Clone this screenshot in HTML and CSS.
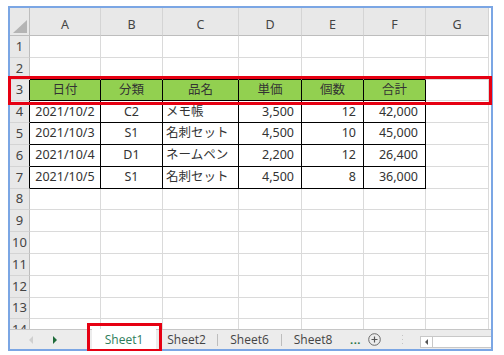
FILE: index.html
```html
<!DOCTYPE html>
<html lang="ja">
  <head>
    <meta charset="UTF-8" />
    <title>Sheet1</title>
    <link rel="stylesheet" href="styles.css">
  </head>
  <body>
    <div class="book">

      <div class="sheet">
        <table class="grid">
          <colgroup>
            <col class="c-row">
            <col class="c-a">
            <col class="c-b">
            <col class="c-c">
            <col class="c-d">
            <col class="c-e">
            <col class="c-f">
            <col class="c-g">
          </colgroup>
          <tr class="head">
            <th class="corner"><span class="tri"></span></th>
            <th>A</th><th>B</th><th>C</th><th>D</th><th>E</th><th>F</th><th>G</th>
          </tr>
          <tr><th>1</th><td></td><td></td><td></td><td></td><td></td><td></td><td></td></tr>
          <tr><th>2</th><td class="above"></td><td class="above"></td><td class="above"></td><td class="above"></td><td class="above"></td><td class="above"></td><td></td></tr>
          <tr class="title">
            <th class="edge">3</th>
            <td class="b ctr">日付</td>
            <td class="b ctr">分類</td>
            <td class="b ctr">品名</td>
            <td class="b ctr">単価</td>
            <td class="b ctr">個数</td>
            <td class="b ctr">合計</td>
            <td></td>
          </tr>
          <tr>
            <th class="edge">4</th>
            <td class="b ctr">2021/10/2</td>
            <td class="b ctr">C2</td>
            <td class="b">メモ帳</td>
            <td class="b num">3,500</td>
            <td class="b num">12</td>
            <td class="b num">42,000</td>
            <td></td>
          </tr>
          <tr>
            <th class="edge">5</th>
            <td class="b ctr">2021/10/3</td>
            <td class="b ctr">S1</td>
            <td class="b">名刺セット</td>
            <td class="b num">4,500</td>
            <td class="b num">10</td>
            <td class="b num">45,000</td>
            <td></td>
          </tr>
          <tr>
            <th class="edge">6</th>
            <td class="b ctr">2021/10/4</td>
            <td class="b ctr">D1</td>
            <td class="b">ネームペン</td>
            <td class="b num">2,200</td>
            <td class="b num">12</td>
            <td class="b num">26,400</td>
            <td></td>
          </tr>
          <tr>
            <th class="edge">7</th>
            <td class="b ctr">2021/10/5</td>
            <td class="b ctr">S1</td>
            <td class="b">名刺セット</td>
            <td class="b num">4,500</td>
            <td class="b num">8</td>
            <td class="b num">36,000</td>
            <td></td>
          </tr>
          <tr><th>8</th><td></td><td></td><td></td><td></td><td></td><td></td><td></td></tr>
          <tr><th>9</th><td></td><td></td><td></td><td></td><td></td><td></td><td></td></tr>
          <tr><th>10</th><td></td><td></td><td></td><td></td><td></td><td></td><td></td></tr>
          <tr><th>11</th><td></td><td></td><td></td><td></td><td></td><td></td><td></td></tr>
          <tr><th>12</th><td></td><td></td><td></td><td></td><td></td><td></td><td></td></tr>
          <tr><th>13</th><td></td><td></td><td></td><td></td><td></td><td></td><td></td></tr>
          <tr><th>14</th><td></td><td></td><td></td><td></td><td></td><td></td><td></td></tr>
        </table>
      </div>

      <div class="tabs">
        <div class="nav">
          <span class="arrow prev"></span>
          <span class="arrow next"></span>
        </div>
        <div class="tab active">Sheet1</div>
        <div class="tab">Sheet2</div>
        <div class="tab wide">Sheet6</div>
        <div class="tab last">Sheet8</div>
        <span class="more">...</span>
        <svg class="add" width="13" height="13" viewBox="0 0 13 13">
          <circle cx="6.5" cy="6.5" r="5.8" fill="none" stroke="#6a6a6a" stroke-width="1"/>
          <path d="M6.5 3.5v6M3.5 6.5h6" stroke="#555" stroke-width="1.2"/>
        </svg>
        <svg class="grip" width="3" height="11" viewBox="0 0 3 11">
          <rect x="1" y="1" width="1" height="1" fill="#c4c4c4"/>
          <rect x="1" y="5" width="1" height="1" fill="#c4c4c4"/>
          <rect x="1" y="9" width="1" height="1" fill="#c4c4c4"/>
        </svg>
        <div class="hscroll">
          <span class="scroll-btn"><span class="arrow small"></span></span>
        </div>
      </div>

    </div>

    <div class="mark mark-row"></div>
    <div class="mark mark-tab"></div>
  </body>
</html>
```

FILE: styles.css
```css
* {
  box-sizing: border-box;
}
body {
  margin: 0;
  padding: 0;
  position: relative;
  background-color: white;
  color: #333;
  font-family: 'Noto Sans', 'Noto Sans CJK JP', sans-serif;
}
.book {
  display: flex;
  flex-direction: column;
  width: 485px;
  height: 345px;
  margin: 6px 0 0 8px;
  border: 2px solid #7ba6e4;
  background-color: white;
}
.sheet {
  flex: 1;
  overflow: hidden;
}

/* grid */
.grid {
  table-layout: fixed;
  width: 479px;
  border-collapse: separate;
  border-spacing: 0;
  font-size: 12.5px;
}
.c-row { width: 20px; }
.c-a { width: 71px; }
.c-b { width: 62px; }
.c-c { width: 76px; }
.c-d { width: 63px; }
.c-e { width: 62px; }
.c-f { width: 62px; }
.c-g { width: 63px; }
.grid tr {
  height: 21.8px;
}
.grid tr.head {
  height: 28px;
}
.grid th, .grid td {
  padding: 0;
  border-right: 1px solid #dadada;
  border-bottom: 1px solid #dadada;
  line-height: 1;
  white-space: nowrap;
  overflow: hidden;
  vertical-align: middle;
}
.grid th {
  background-color: #e8e8e8;
  color: #444;
  font-size: 13px;
  font-weight: normal;
  text-align: center;
  border-right-color: #bdbdbd;
  border-bottom-color: #d4d4d4;
}
.head th {
  vertical-align: bottom;
  padding-bottom: 4px;
  font-size: 12.5px;
  border-right-color: #d4d4d4;
  border-bottom-color: #bdbdbd;
}
.head th.corner {
  padding: 0 2px 2px 0;
  text-align: right;
  border-right-color: #bdbdbd;
}
.tri {
  display: inline-block;
  width: 0;
  height: 0;
  border-left: 14px solid transparent;
  border-bottom: 13px solid #b4b4b4;
  vertical-align: bottom;
}
.grid td.above {
  border-bottom-color: black;
}
.grid th.edge {
  border-right-color: black;
}
.grid td.b {
  padding-left: 3px;
  border-right-color: black;
  border-bottom-color: black;
}
.grid td.ctr {
  padding-left: 0;
  text-align: center;
}
.grid td.num {
  padding-right: 7px;
  text-align: right;
}
.title td.b {
  background-color: #92d050;
}

/* sheet tabs */
.tabs {
  display: flex;
  align-items: center;
  height: 20px;
  border-top: 1px solid #c6c6c6;
  background-color: #ececec;
  font-family: 'Open Sans', sans-serif;
  font-size: 12px;
  color: #444;
}
.nav {
  display: flex;
  align-items: center;
  width: 82px;
  padding-left: 19px;
}
.arrow {
  display: inline-block;
  width: 0;
  height: 0;
  border-top: 4px solid transparent;
  border-bottom: 4px solid transparent;
}
.prev {
  border-right: 4px solid #cfcfcf;
  margin-right: 20px;
}
.next {
  border-left: 4px solid #1e6b3a;
}
.tab {
  display: flex;
  align-items: center;
  justify-content: center;
  width: 62px;
  height: 12px;
  border-right: 1px solid #bdbdbd;
}
.tab.wide {
  width: 64px;
}
.tab.last {
  border-right: 0;
}
.tab.active {
  align-self: stretch;
  height: auto;
  width: 64px;
  margin-top: -1px;
  background-color: white;
  color: #2e7d5b;
  border-right: 0;
}
.more {
  margin-left: 6px;
  color: #1e7145;
  font-weight: bold;
  font-size: 11px;
  letter-spacing: 0.5px;
}
.add {
  margin-left: 7px;
}
.grip {
  margin-left: 20px;
}
.hscroll {
  align-self: flex-end;
  flex: 1;
  height: 12px;
  margin: 0 0 1px 16px;
  border: 1px solid #c8c8c8;
  border-right: 0;
  background-color: white;
}
.scroll-btn {
  display: flex;
  align-items: center;
  justify-content: center;
  width: 12px;
  height: 100%;
  border-right: 1px solid #c8c8c8;
}
.arrow.small {
  border-top-width: 3px;
  border-bottom-width: 3px;
  border-right: 3px solid #555;
}

/* highlight boxes */
.mark {
  position: absolute;
  border: 3px solid #e60012;
}
.mark-row {
  left: 8px;
  top: 76px;
  width: 484px;
  height: 29px;
}
.mark-tab {
  left: 87px;
  top: 323px;
  width: 75px;
  height: 29px;
}
```
